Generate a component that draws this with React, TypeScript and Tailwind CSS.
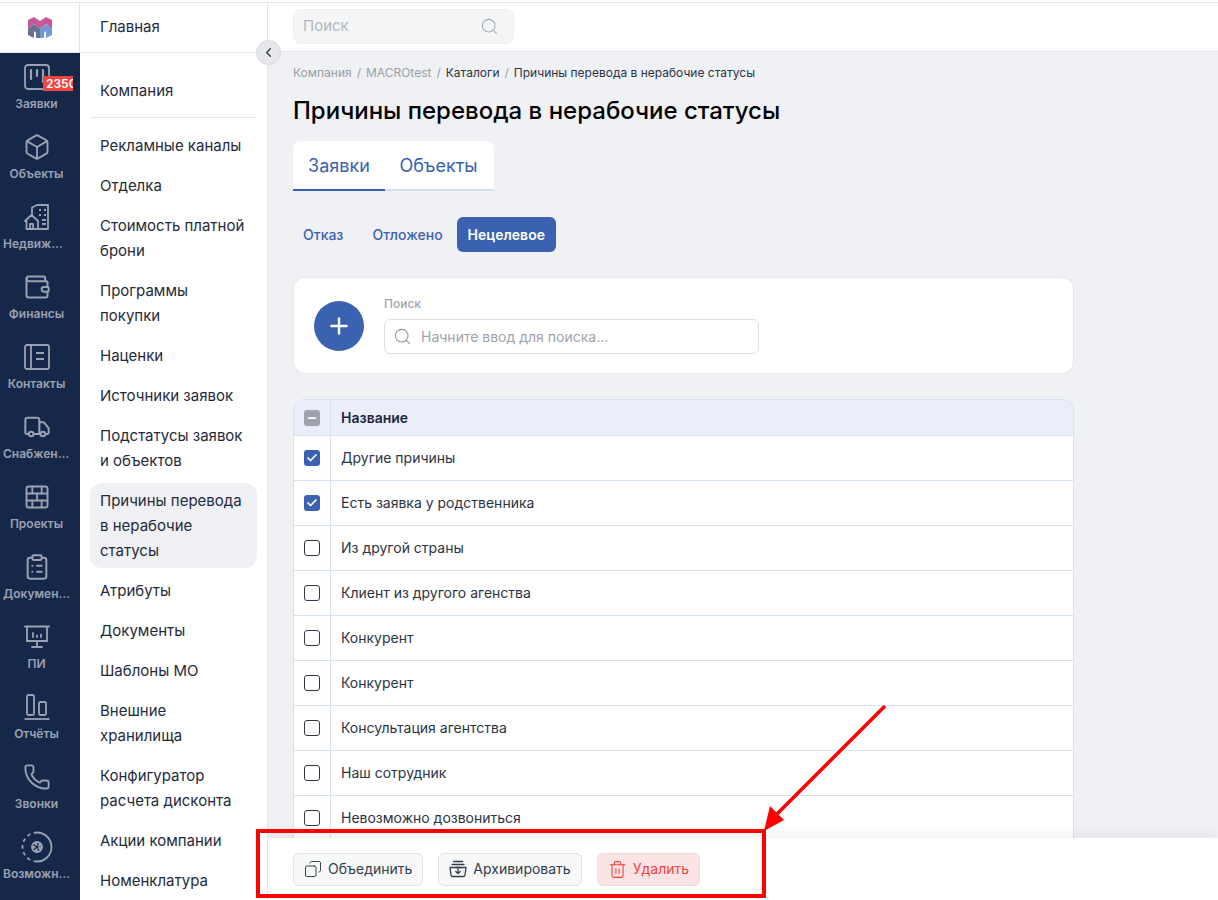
import { Search, Plus, Minus, Check, ChevronLeft, Box, Wallet, Truck, BrickWall, ClipboardList, Phone, Copy, Trash2 } from 'lucide-react';
import type { ReactNode } from 'react';

const inter = 'font-["Inter",sans-serif]';

function KanbanIcon() {
    return (
        <svg width="28" height="28" viewBox="0 0 28 28" fill="none" stroke="currentColor" strokeWidth="1.8" strokeLinecap="round">
            <rect x="2" y="2" width="24" height="24" rx="3" />
            <path d="M8 7v9M14 7v6M20 7v12" strokeWidth="2.2" />
        </svg>
    );
}

function EstateIcon() {
    return (
        <svg width="26" height="26" viewBox="0 0 26 26" fill="none" stroke="currentColor" strokeWidth="1.8" strokeLinejoin="round">
            <path d="M8 11V3.5L13 1h11v24H13" />
            <path d="M1 17l6.5-6 6.5 6v8H2.500V17z" />
            <path d="M6 25v-5h3v5" />
            <path d="M15 6h2M20 6h2M15 11h2M20 11h2M18 16h4M18 20h4" strokeWidth="2" />
        </svg>
    );
}

function ContactsIcon() {
    return (
        <svg width="26" height="26" viewBox="0 0 26 26" fill="none" stroke="currentColor" strokeWidth="1.8">
            <rect x="1" y="1" width="24" height="24" rx="2" />
            <path d="M7 1v24M12 9h8M12 15h8" />
        </svg>
    );
}

function ScreenIcon() {
    return (
        <svg width="26" height="24" viewBox="0 0 26 24" fill="none" stroke="currentColor" strokeWidth="1.8" strokeLinecap="round">
            <path d="M1 1.500h24M3 2v14h20V2M13 16v6M8 22h10" />
            <path d="M9 12V8M13 12v-1.500M17 12V9.500" strokeWidth="1.800" />
        </svg>
    );
}

function BarsIcon() {
    return (
        <svg width="26" height="26" viewBox="0 0 26 26" fill="none" stroke="currentColor" strokeWidth="1.8">
            <rect x="3" y="1" width="7" height="20" rx="1.500" />
            <rect x="15" y="8" width="7" height="13" rx="1.500" />
            <path d="M0.500 25h25" />
        </svg>
    );
}

function FeaturesIcon() {
    return (
        <svg width="32" height="32" viewBox="0 0 32 32" fill="none" stroke="currentColor" strokeWidth="1.8">
            <path d="M16 1.500a14.500 14.500 0 0 1 0 29" />
            <path d="M16 30.500a14.500 14.500 0 0 1-14.500-14.500A14.500 14.500 0 0 1 16 1.500" strokeDasharray="3.500 3.500" />
            <circle cx="16" cy="16" r="3.500" strokeWidth="4" strokeDasharray="3 1.500" />
            <circle cx="16" cy="16" r="5" strokeWidth="1.800" />
        </svg>
    );
}

function ArchiveBoxIcon() {
    return (
        <svg width="18" height="18" viewBox="0 0 18 18" fill="none" stroke="currentColor" strokeWidth="1.3" strokeLinecap="round" strokeLinejoin="round">
            <path d="M4.500 1.500h9M3 4.500h12" />
            <path d="M1 7.500h16l-1 7.500a1.500 1.500 0 0 1-1.500 1.500h-11A1.500 1.500 0 0 1 2 15L1 7.500z" />
            <path d="M9 9v4.500M6.800 11.500 9 13.500l2.200-2M6.500 7.500h5" />
        </svg>
    );
}

function Logo() {
    return (
        <svg width="26" height="21" viewBox="0 0 26 21">
            <path d="M1 3 7 0l6 4 6-4 6 3v9l-6-5-6 5-6-5-6 5z" fill="#c9589a" />
            <path d="M1 12l6-5 6 5v9H9v-5l-2-2v7l-6-3z" fill="#66708f" />
            <path d="M25 12l-6-5-6 5v9h4v-5l2-2v7l6-3z" fill="#7397d6" />
        </svg>
    );
}

const rail: { label: string; icon: ReactNode; badge?: string }[] = [
    { label: 'Заявки', icon: <KanbanIcon />, badge: '2350' },
    { label: 'Объекты', icon: <Box size={28} strokeWidth={1.6} /> },
    { label: 'Недвижимость', icon: <EstateIcon /> },
    { label: 'Финансы', icon: <Wallet size={28} strokeWidth={1.7} /> },
    { label: 'Контакты', icon: <ContactsIcon /> },
    { label: 'Снабжение закупок', icon: <Truck size={28} strokeWidth={1.7} /> },
    { label: 'Проекты', icon: <BrickWall size={28} strokeWidth={1.6} /> },
    { label: 'Документооборот', icon: <ClipboardList size={28} strokeWidth={1.7} /> },
    { label: 'ПИ', icon: <ScreenIcon /> },
    { label: 'Отчёты', icon: <BarsIcon /> },
    { label: 'Звонки', icon: <Phone size={28} strokeWidth={1.6} /> },
    { label: 'Возможности', icon: <FeaturesIcon /> },
];

const menu = [
    'Рекламные каналы',
    'Отделка',
    'Стоимость платной брони',
    'Программы покупки',
    'Наценки',
    'Источники заявок',
    'Подстатусы заявок и объектов',
    'Причины перевода в нерабочие статусы',
    'Атрибуты',
    'Документы',
    'Шаблоны МО',
    'Внешние хранилища',
    'Конфигуратор расчета дисконта',
    'Акции компании',
    'Номенклатура',
];

const rows = [
    { name: 'Другие причины', checked: true },
    { name: 'Есть заявка у родственника', checked: true },
    { name: 'Из другой страны', checked: false },
    { name: 'Клиент из другого агенства', checked: false },
    { name: 'Конкурент', checked: false },
    { name: 'Конкурент', checked: false },
    { name: 'Консультация агентства', checked: false },
    { name: 'Наш сотрудник', checked: false },
    { name: 'Невозможно дозвониться', checked: false },
    { name: 'Нет бюджета', checked: false },
];

function Rail() {
    return (
        <aside className="w-20 shrink-0 flex flex-col">
            <div className="h-[50px] bg-white border-r border-b border-[#e3e5ea] flex items-center justify-center shrink-0">
                <Logo />
            </div>
            <div className="flex-1 bg-[#16284a] text-[#9aa2b1] pt-[4px] overflow-hidden">
                {rail.map((item) => (
                    <div key={item.label} className="relative h-[70px] w-[67px] ml-[3px] flex flex-col items-center">
                        <div className="h-[36px] w-full flex items-center justify-center shrink-0 mt-[2px]">{item.icon}</div>
                        <div className="w-full truncate text-center text-xs leading-[16px] font-semibold mt-[1px]">{item.label}</div>
                        {item.badge && (
                            <span className="absolute left-[40px] top-[19px] w-[30px] h-[15px] pl-[3px] bg-[#f0443e] text-white text-xs leading-[15px] font-semibold overflow-hidden">
                                {item.badge}
                            </span>
                        )}
                    </div>
                ))}
            </div>
        </aside>
    );
}

function Menu() {
    return (
        <nav className="w-[188px] shrink-0 bg-white border-r border-[#e3e5ea] flex flex-col overflow-hidden">
            <div className="h-[50px] shrink-0 border-b border-[#e3e5ea] px-5 flex items-center text-[15px] text-[#1f2a3c]">Главная</div>
            <div className="px-[10px] pt-5 flex flex-col gap-[5px] text-[15px] leading-[25px] text-[#1f2a3c]">
                <div className="px-[10px] py-[5px]">Компания</div>
                <div className="h-px bg-[#e3e5ea] mt-[4px] mb-[5px]" />
                {menu.map((item, i) => (
                    <div key={item} className={`px-[10px] py-[5px] rounded-xl ${i === 7 ? 'bg-[#f0f1f4]' : ''}`}>
                        {item}
                    </div>
                ))}
            </div>
        </nav>
    );
}

function Checkbox({ checked }: { checked: boolean }) {
    if (checked) {
        return (
            <span className="w-4 h-4 rounded-[3px] bg-[#3a62b0] flex items-center justify-center text-white">
                <Check size={12} strokeWidth={3.5} />
            </span>
        );
    }
    return <span className="w-4 h-4 rounded-[3px] border-[1.5px] border-[#323a4a] bg-white" />;
}

function ActionButton({ icon, label, danger }: { icon: ReactNode; label: string; danger?: boolean }) {
    return (
        <button
            className={`h-[33px] px-[10px] flex items-center gap-[6px] rounded-md border text-sm ${
                danger ? 'bg-[#fde4e4] border-[#f8d7d7] text-[#f5413c]' : 'bg-[#f7f8f8] border-[#dfe2e6] text-[#343c4b]'
            }`}
        >
            {icon}
            {label}
        </button>
    );
}

export default function App() {
    return (
        <div className={`${inter} relative h-[900px] w-[1218px] overflow-hidden pt-[2px] bg-white`}>
            <div className="h-px bg-[#e3e5ea]" />
            <div className="flex h-[897px]">
                <Rail />
                <Menu />

                <main className="relative flex-1 min-w-0 bg-[#f0f1f4] overflow-hidden">
                    <header className="h-[49px] bg-white border-b border-[#e3e5ea] px-[25px] pt-[6px]">
                        <div className="w-[221px] h-[35px] rounded-lg bg-[#f4f5f6] border border-[#f0f1f2] pl-[9px] pr-[14px] flex items-center justify-between text-[15px] text-[#b4b8bf]">
                            Поиск
                            <Search size={19} strokeWidth={1.3} className="text-[#a8acb3]" />
                        </div>
                    </header>

                    <div className="px-[25px]">
                        <div className="pt-[12px] text-xs leading-[18px] text-[#9a9ea6] flex gap-[5px]">
                            <span>Компания</span>
                            <span>/</span>
                            <span>MACROtest</span>
                            <span>/</span>
                            <span className="text-[#2b3344]">Каталоги</span>
                            <span>/</span>
                            <span className="text-[#2b3344]">Причины перевода в нерабочие статусы</span>
                        </div>
                        <h1 className="mt-[14px] text-[24px] leading-[30px] font-medium text-black">Причины перевода в нерабочие статусы</h1>

                        <div className="mt-[15px] w-fit flex bg-white rounded-t-lg text-[18px] text-[#3a62b0]">
                            <div className="h-[50px] w-[92px] flex items-center justify-center border-b-2 border-[#3a62b0]">Заявки</div>
                            <div className="h-[50px] w-[109px] pr-[2px] flex items-center justify-center border-b-2 border-[#d3e0f3]">Объекты</div>
                        </div>

                        <div className="mt-[26px] flex gap-[4px] text-sm font-medium text-[#3a62b0]">
                            <div className="h-[35px] px-[10px] flex items-center">Отказ</div>
                            <div className="h-[35px] px-[10px] ml-[5px] flex items-center">Отложено</div>
                            <div className="h-[35px] px-[11px] flex items-center rounded-md bg-[#3a62b0] text-white font-semibold">Нецелевое</div>
                        </div>

                        <section className="mt-[25px] w-[781px] h-[97px] rounded-xl bg-white border border-[#e6e8ec] flex items-center pl-[20px] gap-[20px]">
                            <div className="w-[50px] h-[50px] rounded-full bg-[#3a62b0] flex items-center justify-center text-white">
                                <Plus size={26} strokeWidth={2.2} />
                            </div>
                            <div className="pb-[1px]">
                                <div className="text-xs leading-[16px] font-medium text-[#a0a4ab] mb-[7px]">Поиск</div>
                                <div className="w-[375px] h-[35px] rounded-md border border-[#dcdfe4] flex items-center pl-[8px] gap-[9px] text-sm text-[#9ea3ab]">
                                    <Search size={19} strokeWidth={1.3} className="text-[#8f949c]" />
                                    Начните ввод для поиска...
                                </div>
                            </div>
                        </section>

                        <section className="mt-[25px] w-[781px] rounded-t-xl border border-b-0 border-[#d6e1f2] bg-white overflow-hidden text-sm text-[#2b3344]">
                            <div className="flex h-[36px] bg-[#e9eef8] border-b border-[#d6e1f2] font-semibold text-[#1d2840]">
                                <div className="w-[37px] flex items-center justify-center border-r border-[#d6e1f2]">
                                    <span className="w-4 h-4 rounded-[3px] bg-[#9ea3ae] flex items-center justify-center text-white">
                                        <Minus size={12} strokeWidth={3.5} />
                                    </span>
                                </div>
                                <div className="flex-1 pl-[10px] flex items-center">Название</div>
                            </div>
                            {rows.map((row, i) => (
                                <div key={i} className="flex h-[45px] border-b border-[#d6e1f2]">
                                    <div className="w-[37px] flex items-center justify-center border-r border-[#d6e1f2]">
                                        <Checkbox checked={row.checked} />
                                    </div>
                                    <div className="flex-1 pl-[10px] flex items-center">{row.name}</div>
                                </div>
                            ))}
                        </section>
                    </div>

                    {/* нижняя панель действий поверх таблицы */}
                    <div className="absolute left-0 right-0 bottom-0 h-[62px] bg-white px-[25px] flex items-center gap-[15px] shadow-[0_-6px_10px_rgba(0,0,0,0.04)]">
                        <ActionButton icon={<Copy size={18} strokeWidth={1.3} className="-scale-x-100" />} label="Объединить" />
                        <ActionButton icon={<ArchiveBoxIcon />} label="Архивировать" />
                        <ActionButton icon={<Trash2 size={19} strokeWidth={1.4} />} label="Удалить" danger />
                    </div>
                </main>
            </div>

            <button className="absolute left-[256px] top-[40px] w-[25px] h-[25px] rounded-full bg-[#e6e7ea] border border-[#d9dbe0] flex items-center justify-center text-[#2b3344]">
                <ChevronLeft size={15} strokeWidth={2} />
            </button>

            {/* красная пометка со скриншота */}
            <div className="absolute left-[256px] top-[829px] w-[510px] h-[69px] border-4 border-[#ff0000]" />
            <svg className="absolute left-[750px] top-[695px]" width="150" height="150" viewBox="0 0 150 150" fill="none">
                <path d="M134 12 24 122" stroke="#ff0000" strokeWidth="3.500" strokeLinecap="round" />
                <path d="M14 136l6-25 14 14z" fill="#ff0000" />
            </svg>
        </div>
    );
}
